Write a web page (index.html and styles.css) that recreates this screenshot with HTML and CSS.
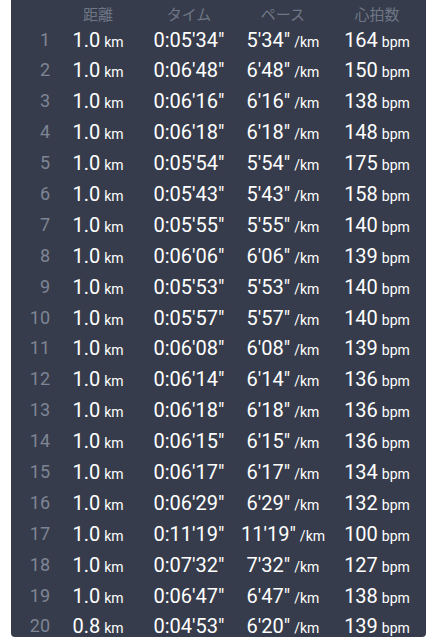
FILE: index.html
```html
<!DOCTYPE html>
<html lang="ja">
<head>
    <meta charset="UTF-8">
    <meta name="viewport" content="width=device-width, initial-scale=1.0">
    <title>Laps</title>
    <link rel="stylesheet" href="styles.css">
</head>
<body>
    <div class="panel">
        <div class="row head">
            <span></span>
            <span>距離</span>
            <span>タイム</span>
            <span>ペース</span>
            <span>心拍数</span>
        </div>
        <div class="row"><span class="no">1</span><span>1.0<small>km</small></span><span>0:05'34"</span><span>5'34"<small>/km</small></span><span>164<small>bpm</small></span></div>
        <div class="row"><span class="no">2</span><span>1.0<small>km</small></span><span>0:06'48"</span><span>6'48"<small>/km</small></span><span>150<small>bpm</small></span></div>
        <div class="row"><span class="no">3</span><span>1.0<small>km</small></span><span>0:06'16"</span><span>6'16"<small>/km</small></span><span>138<small>bpm</small></span></div>
        <div class="row"><span class="no">4</span><span>1.0<small>km</small></span><span>0:06'18"</span><span>6'18"<small>/km</small></span><span>148<small>bpm</small></span></div>
        <div class="row"><span class="no">5</span><span>1.0<small>km</small></span><span>0:05'54"</span><span>5'54"<small>/km</small></span><span>175<small>bpm</small></span></div>
        <div class="row"><span class="no">6</span><span>1.0<small>km</small></span><span>0:05'43"</span><span>5'43"<small>/km</small></span><span>158<small>bpm</small></span></div>
        <div class="row"><span class="no">7</span><span>1.0<small>km</small></span><span>0:05'55"</span><span>5'55"<small>/km</small></span><span>140<small>bpm</small></span></div>
        <div class="row"><span class="no">8</span><span>1.0<small>km</small></span><span>0:06'06"</span><span>6'06"<small>/km</small></span><span>139<small>bpm</small></span></div>
        <div class="row"><span class="no">9</span><span>1.0<small>km</small></span><span>0:05'53"</span><span>5'53"<small>/km</small></span><span>140<small>bpm</small></span></div>
        <div class="row"><span class="no">10</span><span>1.0<small>km</small></span><span>0:05'57"</span><span>5'57"<small>/km</small></span><span>140<small>bpm</small></span></div>
        <div class="row"><span class="no">11</span><span>1.0<small>km</small></span><span>0:06'08"</span><span>6'08"<small>/km</small></span><span>139<small>bpm</small></span></div>
        <div class="row"><span class="no">12</span><span>1.0<small>km</small></span><span>0:06'14"</span><span>6'14"<small>/km</small></span><span>136<small>bpm</small></span></div>
        <div class="row"><span class="no">13</span><span>1.0<small>km</small></span><span>0:06'18"</span><span>6'18"<small>/km</small></span><span>136<small>bpm</small></span></div>
        <div class="row"><span class="no">14</span><span>1.0<small>km</small></span><span>0:06'15"</span><span>6'15"<small>/km</small></span><span>136<small>bpm</small></span></div>
        <div class="row"><span class="no">15</span><span>1.0<small>km</small></span><span>0:06'17"</span><span>6'17"<small>/km</small></span><span>134<small>bpm</small></span></div>
        <div class="row"><span class="no">16</span><span>1.0<small>km</small></span><span>0:06'29"</span><span>6'29"<small>/km</small></span><span>132<small>bpm</small></span></div>
        <div class="row"><span class="no">17</span><span>1.0<small>km</small></span><span>0:11'19"</span><span>11'19"<small>/km</small></span><span>100<small>bpm</small></span></div>
        <div class="row"><span class="no">18</span><span>1.0<small>km</small></span><span>0:07'32"</span><span>7'32"<small>/km</small></span><span>127<small>bpm</small></span></div>
        <div class="row"><span class="no">19</span><span>1.0<small>km</small></span><span>0:06'47"</span><span>6'47"<small>/km</small></span><span>138<small>bpm</small></span></div>
        <div class="row"><span class="no">20</span><span>0.8<small>km</small></span><span>0:04'53"</span><span>6'20"<small>/km</small></span><span>139<small>bpm</small></span></div>
    </div>
</body>
</html>
```

FILE: styles.css
```css
body {
    margin: 0;
    background: #fff;
    font-family: Roboto, "Noto Sans CJK JP", sans-serif;
}
.panel {
    margin-left: 11px;
    width: 415px;
    height: 637px;
    overflow: hidden;
    background-color: #363c4b;
    border-radius: 0 0 4px 4px;
}
.row {
    display: grid;
    grid-template-columns: 45px 84px 98px 90px 98px;
    height: 30.9px;
    line-height: 30.9px;
    color: #fff;
    font-size: 20px;
    text-align: center;
    white-space: nowrap;
}
.row small {
    font-size: 14px;
    margin-left: 4px;
}
.no {
    text-align: right;
    padding-right: 6px;
    color: #7e8594;
    font-size: 18px;
}
.head {
    height: 24.5px;
    padding-top: 4px;
    box-sizing: border-box;
    line-height: 20px;
    font-family: "Noto Sans CJK JP", sans-serif;
    font-size: 15px;
    color: #6f7786;
}
```
